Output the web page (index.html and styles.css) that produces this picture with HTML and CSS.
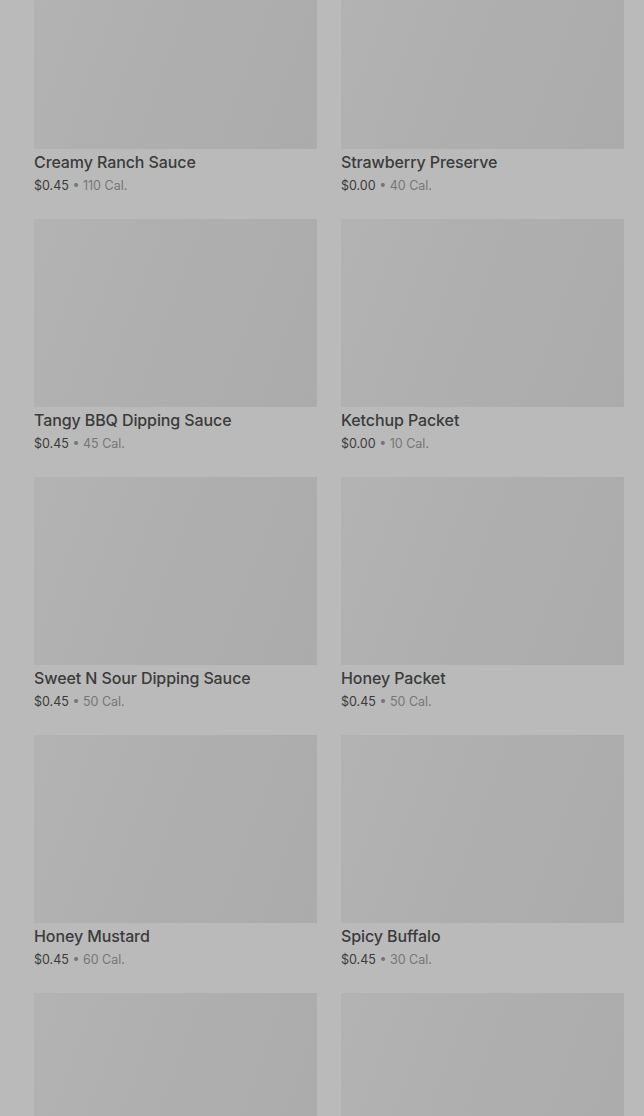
FILE: index.html
```html
<!DOCTYPE html>
<html lang="en">
<head>
    <meta charset="UTF-8">
    <meta name="viewport" content="width=device-width, initial-scale=1.0">
    <title>Sauces</title>
    <link rel="stylesheet" href="styles.css">
</head>
<body>
    <div class="menu">
        <div class="item">
            <div class="thumb"></div>
            <div class="name">Creamy Ranch Sauce</div>
            <div class="meta"><span class="price">$0.45</span> • 110 Cal.</div>
        </div>
        <div class="item">
            <div class="thumb"></div>
            <div class="name">Strawberry Preserve</div>
            <div class="meta"><span class="price">$0.00</span> • 40 Cal.</div>
        </div>
        <div class="item">
            <div class="thumb"></div>
            <div class="name">Tangy BBQ Dipping Sauce</div>
            <div class="meta"><span class="price">$0.45</span> • 45 Cal.</div>
        </div>
        <div class="item">
            <div class="thumb"></div>
            <div class="name">Ketchup Packet</div>
            <div class="meta"><span class="price">$0.00</span> • 10 Cal.</div>
        </div>
        <div class="item">
            <div class="thumb"></div>
            <div class="name">Sweet N Sour Dipping Sauce</div>
            <div class="meta"><span class="price">$0.45</span> • 50 Cal.</div>
        </div>
        <div class="item">
            <div class="thumb"></div>
            <div class="name">Honey Packet</div>
            <div class="meta"><span class="price">$0.45</span> • 50 Cal.</div>
        </div>
        <div class="item">
            <div class="thumb"></div>
            <div class="name">Honey Mustard</div>
            <div class="meta"><span class="price">$0.45</span> • 60 Cal.</div>
        </div>
        <div class="item">
            <div class="thumb"></div>
            <div class="name">Spicy Buffalo</div>
            <div class="meta"><span class="price">$0.45</span> • 30 Cal.</div>
        </div>
        <div class="item">
            <div class="thumb"></div>
        </div>
        <div class="item">
            <div class="thumb"></div>
        </div>
    </div>
</body>
</html>
```

FILE: styles.css
```css
body {
    margin: 0;
    background-color: #bababa;
    font-family: Inter, "Noto Sans", sans-serif;
    overflow: hidden;
}
.menu {
    display: grid;
    grid-template-columns: 283px 283px;
    column-gap: 24px;
    row-gap: 24px;
    padding: 0 20px 0 34px;
    margin-top: -39px;
}
.thumb {
    height: 188px;
    background: linear-gradient(110deg, #b3b3b3 0%, #afafaf 45%, #ababab 100%);
}
.name {
    margin-top: 3px;
    font-size: 16px;
    line-height: 20px;
    font-weight: 500;
    color: #3b3b3b;
    letter-spacing: -0.1px;
}
.meta {
    margin-top: 5px;
    font-size: 12.5px;
    line-height: 18px;
    color: #767676;
}
.price {
    color: #3b3b3b;
}
```
